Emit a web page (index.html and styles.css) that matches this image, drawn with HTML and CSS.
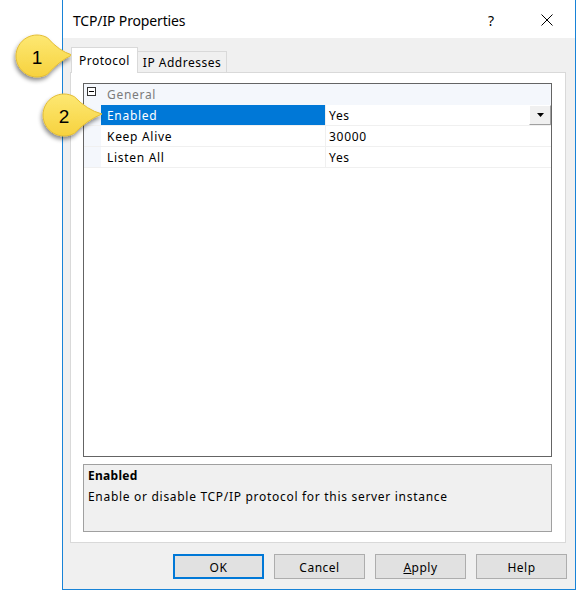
FILE: index.html
```html
<!DOCTYPE html>
<html>
<head>
<meta charset="utf-8">
<title>TCP/IP Properties</title>
<link rel="stylesheet" href="styles.css">
</head>
<body>
<div class="window">
  <div class="titlebar">
    <span class="title">TCP/IP Properties</span>
    <span class="cap-btn help">?</span>
    <span class="cap-btn close">
      <svg width="12" height="12" viewBox="0 0 12 12"><path d="M0.5 0.5 L11.5 11.5 M11.5 0.5 L0.5 11.5" stroke="#000" stroke-width="1" fill="none"/></svg>
    </span>
  </div>
  <div class="client">
    <div class="tabs">
      <div class="tab active">Protocol</div>
      <div class="tab">IP Addresses</div>
    </div>
    <div class="panel">
      <div class="grid">
        <div class="row category">
          <div class="margin"><svg class="minus" width="9" height="9" viewBox="0 0 9 9"><rect x="0.5" y="0.5" width="8" height="8" fill="#fff" stroke="#333"/><path d="M2 4.5 H7" stroke="#000"/></svg></div>
          <div class="name">General</div>
        </div>
        <div class="row">
          <div class="margin"></div>
          <div class="name selected">Enabled</div>
          <div class="value"><span class="val-text">Yes</span><span class="dropbtn"><svg width="7" height="4" viewBox="0 0 7 4"><path d="M0 0 H7 L3.5 4 Z" fill="#000"/></svg></span></div>
        </div>
        <div class="row">
          <div class="margin"></div>
          <div class="name">Keep Alive</div>
          <div class="value"><span class="val-text">30000</span></div>
        </div>
        <div class="row">
          <div class="margin"></div>
          <div class="name">Listen All</div>
          <div class="value"><span class="val-text">Yes</span></div>
        </div>
      </div>
      <div class="desc">
        <div class="desc-title">Enabled</div>
        <div class="desc-text">Enable or disable TCP/IP protocol for this server instance</div>
      </div>
    </div>
    <div class="buttons">
      <button class="btn default">OK</button>
      <button class="btn">Cancel</button>
      <button class="btn"><u>A</u>pply</button>
      <button class="btn">Help</button>
    </div>
  </div>
</div>

<svg class="callouts" width="577" height="591" viewBox="0 0 577 591">
  <defs>
    <linearGradient id="yel" x1="0" y1="0" x2="0" y2="1">
      <stop offset="0" stop-color="#fde873"/>
      <stop offset="1" stop-color="#f7d23e"/>
    </linearGradient>
    <filter id="sh" x="-30%" y="-30%" width="160%" height="170%">
      <feDropShadow dx="-1" dy="3" stdDeviation="2" flood-color="#000" flood-opacity="0.45"/>
    </filter>
  </defs>
  <g transform="translate(37 56)" filter="url(#sh)">
    <path d="M10.5 -18.2 Q22 -5 35 -1 Q22 5 10.5 18.2 A21 21 0 1 1 10.5 -18.2 Z" fill="url(#yel)" stroke="#e3bd34" stroke-width="1"/>
  </g>
  <text class="num" x="37" y="64" text-anchor="middle">1</text>
  <g transform="translate(64 115)" filter="url(#sh)">
    <path d="M10.5 -18.2 Q23 -5 38 -1 Q23 5 10.5 18.2 A21 21 0 1 1 10.5 -18.2 Z" fill="url(#yel)" stroke="#e3bd34" stroke-width="1"/>
  </g>
  <text class="num" x="64" y="123" text-anchor="middle">2</text>
</svg>
</body>
</html>
```

FILE: styles.css
```css
html, body {
  margin: 0;
  padding: 0;
}
body {
  background: #fff;
  font-family: "Noto Sans", "Open Sans", sans-serif;
  font-size: 12px;
  letter-spacing: 0.7px;
  color: #000;
  position: relative;
  width: 577px;
  height: 591px;
  overflow: hidden;
}
.window {
  margin-left: 62px;
  width: 514px;
  height: 590px;
  box-sizing: border-box;
  border: 1px solid #1883d7;
  border-top: none;
  background: #f0f0f0;
  display: flex;
  flex-direction: column;
}
.titlebar {
  height: 38px;
  flex: none;
  background: #fff;
  display: flex;
  align-items: center;
  padding-left: 10px;
  padding-right: 5px;
}
.title {
  flex: 1;
  font-size: 14px;
  letter-spacing: -0.15px;
  color: #000;
  padding-top: 2px;
}
.cap-btn {
  width: 46px;
  height: 38px;
  display: flex;
  align-items: center;
  justify-content: center;
}
.help {
  font-size: 14px;
  letter-spacing: 0;
  margin-right: 10px;
  padding-top: 2px;
  box-sizing: border-box;
}
.close {
  padding-top: 1px;
  box-sizing: border-box;
}
.client {
  flex: 1;
  display: flex;
  flex-direction: column;
  padding: 9px 9px 10px 7px;
}
.tabs {
  height: 25px;
  display: flex;
  align-items: flex-end;
  padding-left: 1px;
}
.tab {
  box-sizing: border-box;
  height: 21px;
  width: 89px;
  border: 1px solid #d9d9d9;
  border-left: none;
  border-bottom: none;
  background: #f0f0f0;
  text-align: center;
  line-height: 22px;
  letter-spacing: 0.5px;
  color: #000;
  overflow: hidden;
}
.tab.active {
  width: 67px;
  height: 26px;
  margin-bottom: -1px;
  border-left: 1px solid #d9d9d9;
  background: #fff;
  position: relative;
  z-index: 1;
  padding-top: 2px;
  line-height: 22px;
}
.panel {
  box-sizing: border-box;
  height: 471px;
  background: #fff;
  border: 1px solid #d9d9d9;
  padding: 10px 13px 10px 12px;
  display: flex;
  flex-direction: column;
  gap: 7px;
}
.grid {
  box-sizing: border-box;
  height: 374px;
  border: 1px solid #646464;
  background: #fff;
}
.row {
  display: flex;
  height: 21px;
  box-sizing: border-box;
  border-bottom: 1px solid #f0f0f0;
  line-height: 22px;
}
.row.category {
  background: #f4f7fc;
  border-bottom-color: #f4f7fc;
}
.margin {
  width: 17px;
  flex: none;
  background: #f4f7fc;
}
.minus {
  display: block;
  margin: 3px 0 0 3px;
}
.name {
  width: 225px;
  flex: none;
  padding-left: 6px;
  box-sizing: border-box;
  border-right: 1px solid #f0f0f0;
  color: #000;
  overflow: hidden;
}
.category .name {
  border-right: none;
  color: #7b7b7b;
}
.name.selected {
  background: #0078d7;
  color: #fff;
}
.value {
  flex: 1;
  display: flex;
  padding-left: 3px;
  overflow: hidden;
}
.val-text {
  flex: 1;
}
.dropbtn {
  width: 22px;
  height: 20px;
  box-sizing: border-box;
  background: #f0f0f0;
  border-top: 1px solid #fff;
  border-left: 1px solid #fff;
  border-right: 1px solid #a0a0a0;
  border-bottom: 1px solid #a0a0a0;
  display: flex;
  align-items: center;
  justify-content: center;
}
.desc {
  box-sizing: border-box;
  height: 68px;
  border: 1px solid #a0a0a0;
  background: #f0f0f0;
  padding: 1px 4px 0 4px;
  line-height: 20px;
}
.desc-title {
  font-weight: bold;
  letter-spacing: 0.3px;
}
.desc-text {
  line-height: 21px;
}
.buttons {
  display: flex;
  justify-content: flex-end;
  gap: 10px;
  margin-top: 11px;
  margin-right: -1px;
}
.btn {
  width: 91px;
  height: 25px;
  box-sizing: border-box;
  background: #e1e1e1;
  border: 1px solid #adadad;
  font-family: "Noto Sans", "Open Sans", sans-serif;
  font-size: 12px;
  letter-spacing: 0.5px;
  color: #000;
  padding: 1px 0 0 0;
  margin: 0;
}
.btn.default {
  border: 2px solid #0078d7;
}
.callouts {
  position: absolute;
  left: 0;
  top: 0;
  pointer-events: none;
}
.num {
  font-family: "Liberation Sans", Arial, sans-serif;
  font-size: 19px;
  letter-spacing: 0;
  fill: #000;
}
```
